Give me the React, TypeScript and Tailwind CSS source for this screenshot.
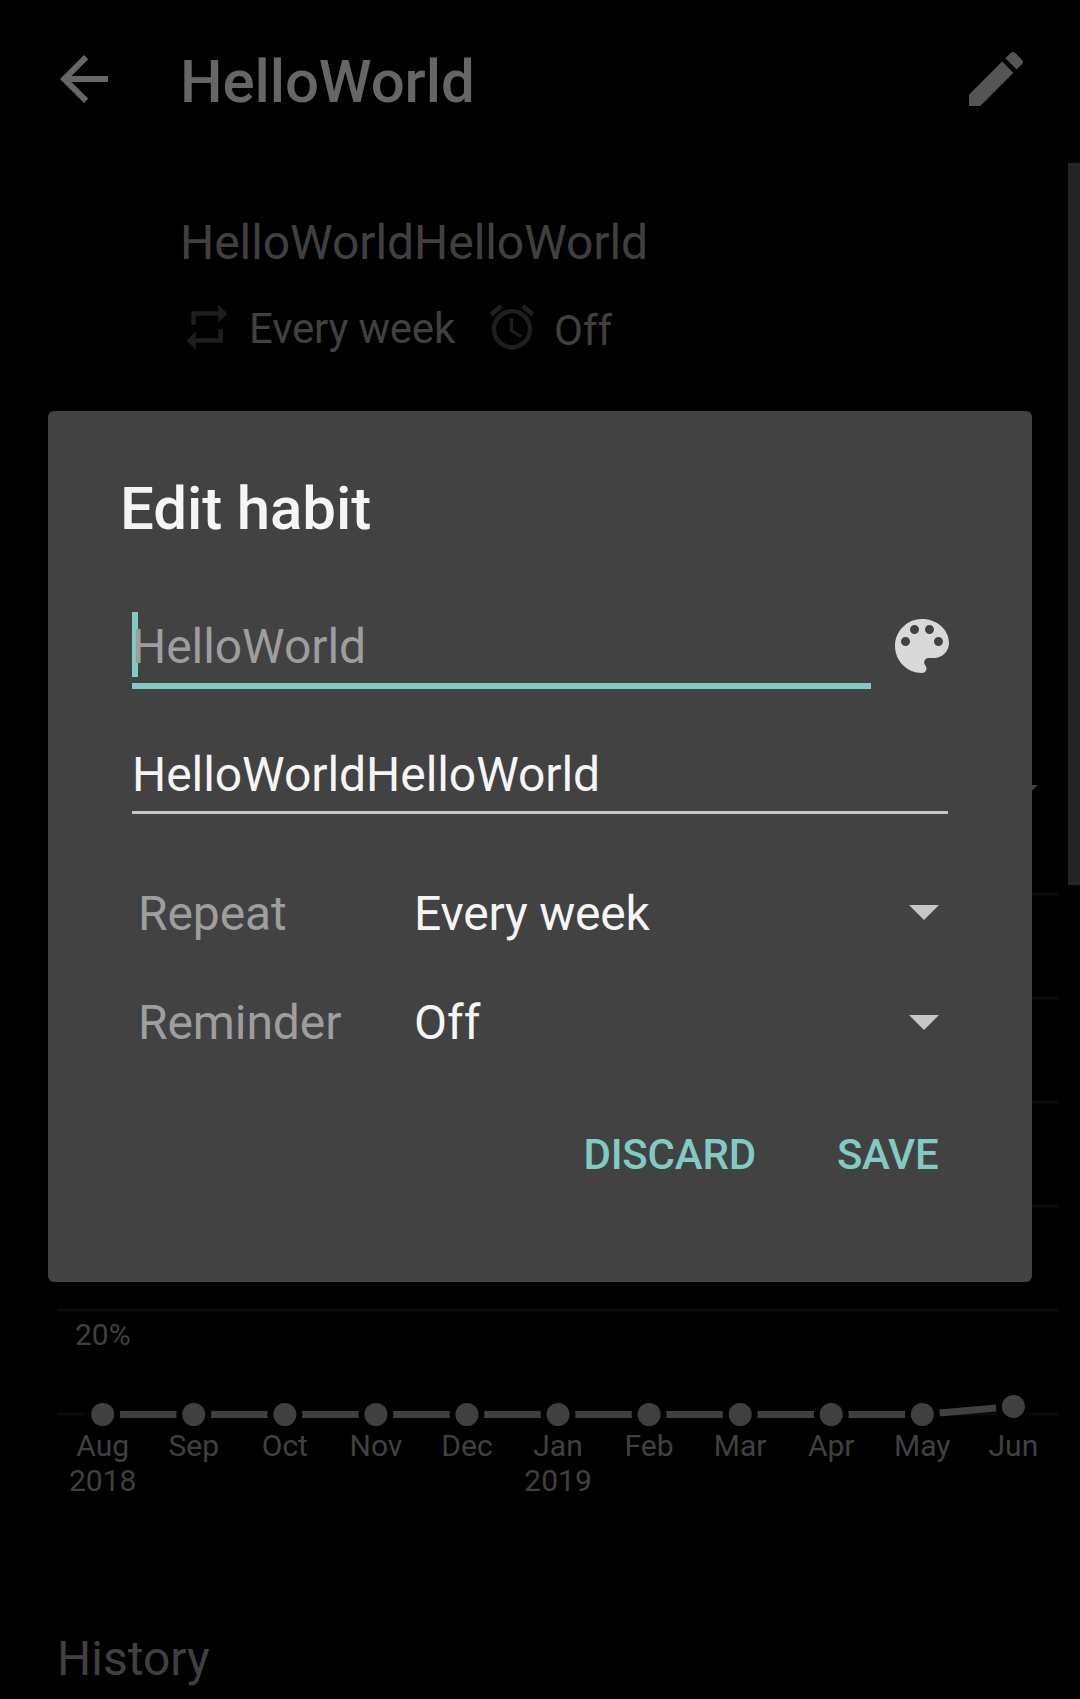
const MONTHS = ["Aug", "Sep", "Oct", "Nov", "Dec", "Jan", "Feb", "Mar", "Apr", "May", "Jun"];
const YEARS: Record<string, string> = { Aug: "2018", Jan: "2019" };
const SCORES = [0, 0, 0, 0, 0, 0, 0, 0, 0, 0, 1.55];

// Chart geometry, in pixels from the chart's top left corner
const STEP = 91.07;
const FIRST_X = 45.7;
const BASE_Y = 524.5;

type IconProps = { d: string; className: string };

function Icon({ d, className }: IconProps) {
  return (
    <svg viewBox="0 0 24 24" fill="currentColor" className={className} aria-hidden="true">
      <path d={d} />
    </svg>
  );
}

const ICONS = {
  back: "M20 11H7.83l5.59-5.59L12 4l-8 8 8 8 1.41-1.41L7.83 13H20v-2z",
  edit: "M3 17.25V21h3.75L17.81 9.94l-3.75-3.75L3 17.25zM20.71 7.04c.39-.39.39-1.02 0-1.41l-2.34-2.34c-.39-.39-1.02-.39-1.41 0l-1.83 1.83 3.75 3.75 1.83-1.83z",
  repeat: "M7 7h10v3l4-4-4-4v3H5v6h2V7zm10 10H7v-3l-4 4 4 4v-3h12v-6h-2v4z",
  alarm:
    "M22 5.72l-4.6-3.86-1.29 1.53 4.6 3.86L22 5.72zM7.88 3.39L6.6 1.86 2 5.71l1.29 1.53 4.59-3.85zM12.5 8H11v6l4.75 2.85.75-1.23-4-2.37V8zM12 4c-4.97 0-9 4.03-9 9s4.02 9 9 9c4.97 0 9-4.03 9-9s-4.03-9-9-9zm0 16c-3.87 0-7-3.13-7-7s3.13-7 7-7 7 3.13 7 7-3.13 7-7 7z",
  palette:
    "M12 3c-4.97 0-9 4.03-9 9s4.03 9 9 9c.83 0 1.5-.67 1.5-1.5 0-.39-.15-.74-.39-1.01-.23-.26-.38-.61-.38-.99 0-.83.67-1.5 1.5-1.5H16c2.76 0 5-2.24 5-5 0-4.42-4.03-8-9-8zm-5.5 9c-.83 0-1.5-.67-1.5-1.5S5.67 9 6.5 9 8 9.67 8 10.5 7.33 12 6.5 12zm3-4C8.67 8 8 7.33 8 6.5S8.67 5 9.5 5s1.5.67 1.5 1.5S10.33 8 9.5 8zm5 0c-.83 0-1.5-.67-1.5-1.5S13.67 5 14.5 5s1.5.67 1.5 1.5S15.33 8 14.5 8zm3 4c-.83 0-1.5-.67-1.5-1.5S16.67 9 17.5 9s1.5.67 1.5 1.5-.67 1.5-1.5 1.5z",
};

function Caret({ className }: { className: string }) {
  return (
    <svg viewBox="0 0 30 15" fill="currentColor" className={className} aria-hidden="true">
      <path d="M0 0h30L15 15z" />
    </svg>
  );
}

function ScoreChart() {
  const points = SCORES.map((s, i) => ({ x: FIRST_X + i * STEP, y: BASE_Y - s * 5.2 }));
  return (
    <svg viewBox="0 0 1002 620" className="block h-[620px] w-[1002px]">
      {[0, 1, 2, 3, 4, 5].map((i) => (
        <rect key={i} x="0" y={2.5 + i * 104} width="1002" height="3" fill="#0b0b0b" />
      ))}
      {points.slice(1).map((p, i) => (
        <line key={i} x1={points[i].x} y1={points[i].y} x2={p.x} y2={p.y} stroke="#404040" strokeWidth="7" />
      ))}
      {points.map((p, i) => (
        <g key={i}>
          <circle cx={p.x} cy={p.y} r="17.5" fill="#000" />
          <circle cx={p.x} cy={p.y} r="11.5" fill="#404040" />
        </g>
      ))}
      <g fill="#404040" fontSize="30">
        <text x="18" y="455">20%</text>
        {MONTHS.map((m, i) => (
          <g key={m} textAnchor="middle">
            <text x={points[i].x} y="566">{m}</text>
            {YEARS[m] && <text x={points[i].x} y="600.5">{YEARS[m]}</text>}
          </g>
        ))}
      </g>
    </svg>
  );
}

type PickerProps = { label: string; value: string; valueClass: string; caretClass: string };

function Picker({ label, value, valueClass, caretClass }: PickerProps) {
  return (
    <div className="flex h-[57px] items-start pl-[18px]">
      <span className="w-[276px] tracking-[-0.1px] text-[#9e9e9e]">{label}</span>
      <span className={`flex-1 text-[#f5f5f5] ${valueClass}`}>{value}</span>
      <Caret className={`mr-[21px] h-[15px] w-[30px] text-[#c7c7c7] ${caretClass}`} />
    </div>
  );
}

function EditDialog() {
  return (
    <div className="absolute inset-x-12 top-[411px] h-[871px] rounded-[6px] bg-[#424242] pt-[62px] text-[48px] leading-[57px]">
      <h2 className="ml-[72px] text-[60px] leading-[71px] font-medium tracking-[-0.1px] text-[#f5f5f5]">Edit habit</h2>
      <div className="mx-[84px] mt-[68px] w-[816px] tracking-[-0.06px]">
        <div className="flex">
          <div className="relative h-[77px] w-[739px] shrink-0 border-b-[6px] border-[#80cbc4] pt-[6px] text-[#9e9e9e]">
            <div className="absolute top-0 left-0 h-[65px] w-[6px] bg-[#80cbc4]" />
            <span className="relative">HelloWorld</span>
          </div>
          <Icon d={ICONS.palette} className="-mt-[2px] ml-[15px] size-[72px] shrink-0 text-[#d9d9d9]" />
        </div>
        <div className="mt-[57px] h-[68px] border-b-[3px] border-[#c7c7c7] text-[#f5f5f5]">HelloWorldHelloWorld</div>
      </div>
      <div className="mt-[71px] ml-[72px] flex w-[840px] flex-col gap-[52px]">
        <Picker label="Repeat" value="Every week" valueClass="tracking-[-0.2px]" caretClass="mt-[20px]" />
        <Picker label="Reminder" value="Off" valueClass="tracking-normal" caretClass="mt-[21px]" />
      </div>
      <div className="mt-[79px] flex justify-end gap-[81px] pr-[93.5px] text-[42px] leading-[49px] font-medium tracking-[-0.2px] text-[#80cbc4]">
        <button>DISCARD</button>
        <button>SAVE</button>
      </div>
    </div>
  );
}

export default function App() {
  return (
    <div className="relative h-[1699px] w-[1080px] overflow-hidden bg-black font-['Roboto',sans-serif] text-[#404040]">
      <header className="flex items-start px-12 pt-[43px] text-[#666]">
        <Icon d={ICONS.back} className="size-[72px]" />
        <h1 className="mt-[3px] ml-[60px] flex-1 text-[60px] leading-[71px] font-medium tracking-[-0.1px]">HelloWorld</h1>
        <Icon d={ICONS.edit} className="size-[72px] text-[#555]" />
      </header>
      <section className="mt-[97px] ml-[180px]">
        <p className="text-[48px] leading-[57px] tracking-[-0.06px]">HelloWorldHelloWorld</p>
        <div className="mt-[29px] flex items-start text-[42px] leading-[49px]">
          <Icon d={ICONS.repeat} className="size-[54px] text-[#1f1f1f]" />
          <span className="mt-[4px] ml-[15px] w-[236px] tracking-[-0.2px]">Every week</span>
          <Icon d={ICONS.alarm} className="size-[54px] text-[#1f1f1f]" />
          <span className="mt-[6px] ml-[15px]">Off</span>
        </div>
      </section>
      <section className="mt-[430px] ml-[57px]">
        <Caret className="ml-[951px] h-[15px] w-[30px]" />
        <div className="mt-[90px]">
          <ScoreChart />
        </div>
        <h3 className="mt-[120px] text-[48px] leading-[57px]">History</h3>
      </section>
      <div className="absolute top-[163px] right-0 h-[722px] w-3 bg-[#242424]" />
      <EditDialog />
    </div>
  );
}
